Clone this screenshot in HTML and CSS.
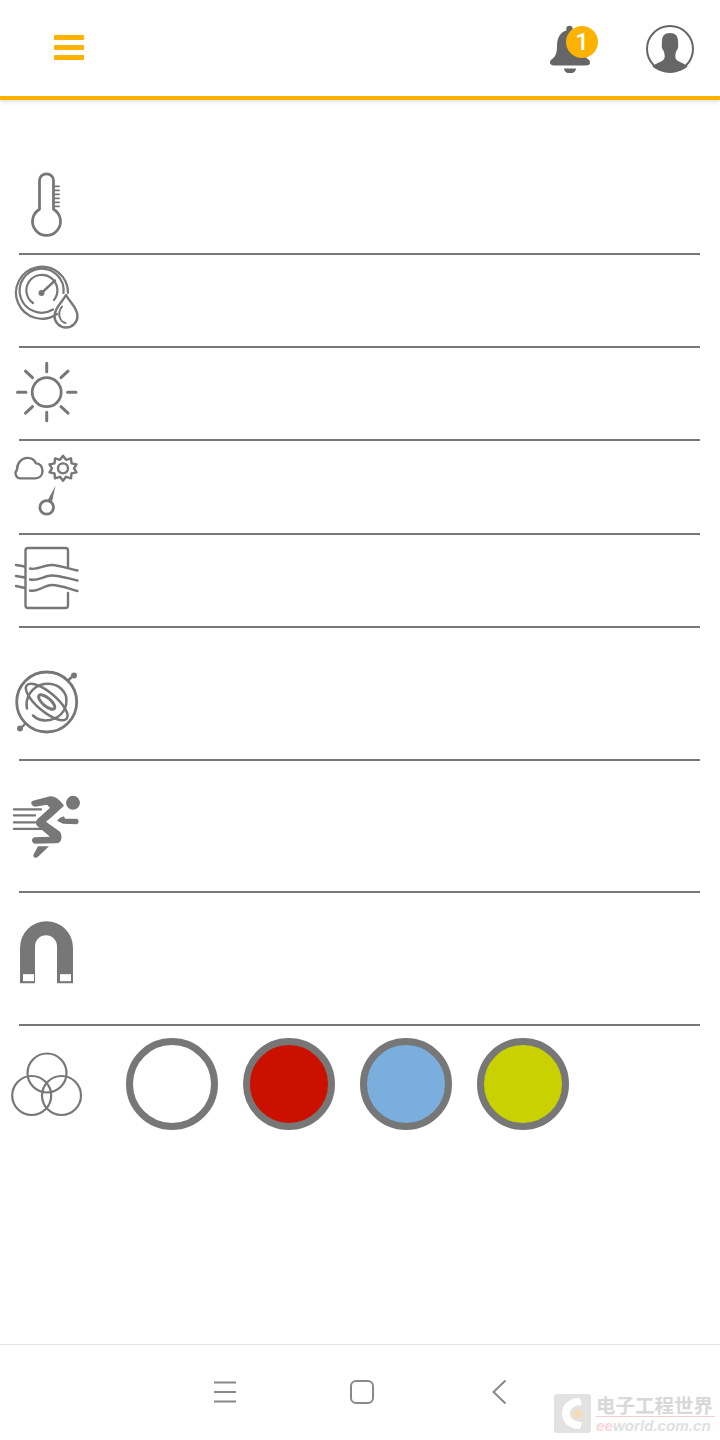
FILE: index.html
```html
<!DOCTYPE html>
<html lang="en">
<head>
    <meta charset="UTF-8">
    <meta name="viewport" content="width=device-width, initial-scale=1.0">
    <title>Sensors</title>
    <link rel="stylesheet" href="styles.css">
</head>
<body>
    <div class="topbar">
        <div class="menu-btn"><span></span><span></span><span></span></div>
        <div class="top-actions">
            <div class="bell">
                <svg class="top-icon" viewBox="550 25 48 48">
                    <circle cx="569.5" cy="29" r="3.2"/>
                    <path d="M570 30C561 30 557 37 557 46C557 54 555 57 551.500 59.500C548.500 62 550 65.500 554 65.500H586C590 65.500 591.500 62 588.500 59.500C585 57 583 54 583 46C583 37 579 30 570 30Z"/>
                    <path d="M564 68.500H576A6 5 0 0 1 564 68.500Z"/>
                </svg>
                <span class="badge">1</span>
            </div>
            <svg class="top-icon" viewBox="646 25 48 48">
                <circle class="avatar-ring" cx="670" cy="49" r="23"/>
                <path d="M670 33C664.500 33 662 36 662 41C662 44 661.500 46 662 48C662.500 50 663.500 50 664 52C664.500 54 665 56 664.500 58C664 60 662 61 659 62.500C656 64 653.500 65 652.500 66.500C657 70.500 663 72 670 72C677 72 683 70.500 687.500 66.500C686.500 65 684 64 681 62.500C678 61 676 60 675.500 58C675 56 675.500 54 676 52C676.500 50 677.500 50 678 48C678.500 46 678 44 678 41C678 36 675.500 33 670 33Z"/>
            </svg>
        </div>
    </div>

    <div class="sensor-list">
        <div class="row">
            <!-- temperature -->
            <svg class="icon" viewBox="15 175.170 64 64">
                <path d="M39.500 209.500V180.500A7 6.500 0 0 1 53.500 180.500V209.500A14 14 0 1 1 39.500 209.500Z"/>
                <path d="M54 186.500H59M54 190.500H59M54 194.500H59M54 198.500H59M54 202.500H59M54 206.500H59" stroke-width="1.800"/>
            </svg>
        </div>
        <div class="rule"></div>
        <div class="row">
            <!-- pressure and humidity -->
            <svg class="icon" viewBox="15 268.500 64 64">
                <path d="M57 314.500A26 26 0 1 1 68 293.500" stroke-width="2.200"/>
                <path d="M53 310A22 22 0 1 1 63.500 293.500" stroke-width="2.200"/>
                <path d="M33 303.500A15.500 15.500 0 1 1 54 300.500" stroke-width="2.200"/>
                <path d="M41.500 293.500L55 281" stroke-width="2.400"/>
                <circle class="solid" cx="41.500" cy="293.500" r="3"/>
                <path d="M66 295.500C70 303 77.500 308 77.500 316.500A11.500 11.500 0 0 1 54.500 316.500C54.500 308 62 303 66 295.500Z" stroke-width="2.400"/>
                <path d="M62 307C59 311 58.500 315 60 318.500C61 321 63 323 65.500 323.500" stroke-width="2"/>
            </svg>
        </div>
        <div class="rule"></div>
        <div class="row">
            <!-- light -->
            <svg class="icon" viewBox="15 361.830 64 64">
                <circle cx="46.700" cy="392" r="14.500"/>
                <path d="M46.700 363V371.500M46.700 412V420.500M17.500 392H26M67.500 392H76M25.500 371L32.500 377.500M61 377.500L68 371M25.500 413L32.500 406.500M61 406.500L68 413" stroke-width="3"/>
            </svg>
        </div>
        <div class="rule"></div>
        <div class="row">
            <!-- color temperature -->
            <svg class="icon" viewBox="15 455.170 64 64">
                <path d="M21 478.500A5 5 0 0 1 17 470C17 463 21.500 458 27.500 458C31.500 458 34.500 460 36 463.500C40 463.500 42.500 467 42.500 471C42.500 475.500 39.500 478.500 35.500 478.500Z" stroke-width="2.400"/>
                <path d="M63 456L66 460L71 458.500L71.500 463.500L76.500 464.500L74 468.500L76.500 472.500L71.500 473.500L71 478.500L66 477L63 481L60 477L55 478.500L54.500 473.500L49.500 472.500L52 468.500L49.500 464.500L54.500 463.500L55 458.500L60 460Z" stroke-width="2.400"/>
                <circle cx="63" cy="468.500" r="5" stroke-width="2.400"/>
                <circle cx="46.700" cy="507.500" r="6.800" stroke-width="2.800"/>
                <path class="solid" d="M55.500 486L52 502L48 500Z"/>
            </svg>
        </div>
        <div class="rule"></div>
        <div class="row">
            <!-- air flow -->
            <svg class="icon" viewBox="15 548.500 64 64">
                <path d="M68 568V551A2.500 2.500 0 0 0 65.500 548.500H28A2.500 2.500 0 0 0 25.500 551V606A2.500 2.500 0 0 0 28 608.500H65.500A2.500 2.500 0 0 0 68 606V593.500" stroke-width="2.400"/>
                <path d="M16 565.500L25 567M16 576.500L25 578M16 586.500L25 588.500M30 569C38 571 44 565 52 565.500C60 566 68 569 77.500 571M30 580C38 582 44 576 52 576C60 576 68 579 77.500 581M30 591C38 593 44 585.500 52 585.500C60 585.500 68 589 77.500 591.500" stroke-width="2.400"/>
            </svg>
        </div>
        <div class="rule"></div>
        <div class="row tall">
            <!-- gyroscope -->
            <svg class="icon" viewBox="15 661.500 64 64">
                <circle cx="46.700" cy="702.500" r="30" stroke-width="2.800"/>
                <path d="M68 681L74 675.500M25.500 724L20 729.500" stroke-width="2.400"/>
                <circle class="solid" cx="74" cy="676" r="3"/>
                <circle class="solid" cx="20" cy="729" r="3"/>
                <ellipse cx="46.700" cy="702.500" rx="26" ry="9.500" transform="rotate(40 46.700 702.500)" stroke-width="2.500"/>
                <path d="M27 709C25 699 31 687 44 684.500C56 682.500 65 690 66.500 699M66 697C68 708 62 718 50 720.500C44 721.500 37 720 33 716" stroke-width="2.500"/>
                <ellipse cx="46.700" cy="702.500" rx="10" ry="4" transform="rotate(40 46.700 702.500)" stroke-width="3"/>
            </svg>
        </div>
        <div class="rule"></div>
        <div class="row tall">
            <!-- motion -->
            <svg class="icon" viewBox="15 794.170 64 64">
                <path d="M14 809.500H41M14 815.500H35M14 822.500H35M14 829H43" stroke-width="2.400"/>
                <circle class="solid" cx="73" cy="803" r="7"/>
                <path class="solid" d="M33 801L50 796.500C55 796 60 800 64 806L52 817L46 822L60 832C62 835 62 840 60 842C59 843 57 843.500 55 843.500L35 844C31 843.500 31 837.500 35 837.500L50 837L37 826C35 823 36 820 39 818L50 808L47 805L35 807C31 806 30 802 33 801Z"/>
                <path class="solid" d="M60 818L64 816.500L65 819H76C79.500 819 79.500 824.500 76 824.500L63 824L57 821Z"/>
                <path class="solid" d="M38 846.500H49L38 857C35 859.500 32 857 34 854Z"/>
            </svg>
        </div>
        <div class="rule"></div>
        <div class="row tall">
            <!-- magnet -->
            <svg class="icon" viewBox="15 926.830 64 64">
                <path class="solid" d="M20 983V947.500A26.500 26.500 0 0 1 73 947.500V983H57V946A11 11 0 0 0 35 946V983Z"/>
                <rect class="cutout" x="23" y="974" width="11" height="7"/>
                <rect class="cutout" x="60" y="974" width="11" height="7"/>
            </svg>
        </div>
        <div class="rule"></div>
        <div class="row color-row">
            <!-- color -->
            <svg class="icon venn" viewBox="11 1052 72 64">
                <circle cx="47" cy="1073" r="19.500" stroke-width="2.200"/>
                <circle cx="31.700" cy="1095.500" r="19.500" stroke-width="2.200"/>
                <circle cx="61.500" cy="1095.500" r="19.500" stroke-width="2.200"/>
            </svg>
            <div class="swatches">
                <div class="swatch white"></div>
                <div class="swatch red"></div>
                <div class="swatch blue"></div>
                <div class="swatch lime"></div>
            </div>
        </div>
    </div>

    <div class="softkeys">
        <svg class="softkey" viewBox="0 0 24 24"><path d="M1 2.500H23M1 12H23M1 21.500H23"/></svg>
        <svg class="softkey" viewBox="0 0 24 24"><rect x="1" y="1" width="22" height="22" rx="5"/></svg>
        <svg class="softkey" viewBox="0 0 24 24"><path d="M19.500 0.500L7.500 12L19.500 23.500"/></svg>
    </div>

    <div class="watermark">
        <svg class="wm-logo" viewBox="0 0 37 39">
            <rect width="37" height="39" rx="3" fill="#e4e2e0"/>
            <path d="M26 4C14 4 8 11 8 19.500C8 28 14 35 26 35L28 28C21 28 16 25 16 19.500C16 14 21 11 28 11Z" fill="#fff"/>
            <circle cx="23.500" cy="20" r="4.500" fill="#f6dcb4"/>
        </svg>
        <div class="wm-text">
            <div class="wm-cn">电子工程世界</div>
            <div class="wm-en"><span class="wm-ee">ee</span>world.com.cn</div>
        </div>
    </div>
</body>
</html>
```

FILE: styles.css
```css
html, body {
    margin: 0;
    padding: 0;
}
body {
    width: 720px;
    height: 1440px;
    position: relative;
    display: flex;
    flex-direction: column;
    overflow: hidden;
    background-color: #fff;
    font-family: Roboto, Arial, sans-serif;
}

/* top bar */
.topbar {
    height: 96px;
    box-sizing: content-box;
    flex-shrink: 0;
    display: flex;
    justify-content: space-between;
    align-items: center;
    padding: 0 26px 0 54px;
    border-bottom: 4px solid #fbb200;
    box-shadow: 0 2px 4px rgba(0, 0, 0, 0.12);
}
.menu-btn {
    display: flex;
    flex-direction: column;
    gap: 5px;
    margin-bottom: 1px;
}
.menu-btn span {
    display: block;
    width: 30px;
    height: 5px;
    border-radius: 1px;
    background-color: #fbb200;
}
.top-actions {
    display: flex;
    gap: 48px;
    padding-top: 2px;
}
.bell {
    position: relative;
    width: 48px;
    height: 48px;
}
.top-icon {
    display: block;
    width: 48px;
    height: 48px;
    fill: #666;
}
.avatar-ring {
    fill: none;
    stroke: #666;
    stroke-width: 2;
}
.badge {
    position: absolute;
    left: 16px;
    top: 1px;
    width: 32px;
    height: 32px;
    border-radius: 50%;
    background-color: #fbb200;
    color: #fff;
    font-size: 24px;
    font-weight: 500;
    line-height: 32px;
    text-align: center;
}

/* sensor rows */
.sensor-list {
    flex: 1;
    padding-top: 61.5px;
}
.row {
    height: 91.33px;
    display: flex;
    align-items: center;
    padding-left: 15px;
}
.row.tall {
    height: 130.67px;
}
.rule {
    height: 2px;
    margin: 0 20px 0 19px;
    background-color: #777;
}
.icon {
    display: block;
    width: 64px;
    height: 64px;
    overflow: visible;
    fill: none;
    stroke: #777;
    stroke-width: 2.8;
    stroke-linecap: round;
    stroke-linejoin: round;
}
.icon .solid {
    fill: #777;
    stroke: none;
}
.icon .cutout {
    fill: #fff;
    stroke: none;
}

/* color row */
.row.color-row {
    height: 115.67px;
    padding-left: 11px;
}
.venn {
    width: 72px;
    margin-right: 42.5px;
}
.swatches {
    display: flex;
    gap: 25px;
}
.swatch {
    width: 92px;
    height: 92px;
    box-sizing: border-box;
    border: 7.5px solid #777;
    border-radius: 50%;
}
.white { background-color: #fff; }
.red { background-color: #cb1000; }
.blue { background-color: #7aaedd; }
.lime { background-color: #c9d200; }

/* phone soft keys */
.softkeys {
    height: 96px;
    flex-shrink: 0;
    box-sizing: border-box;
    display: flex;
    align-items: center;
    gap: 112.5px;
    padding: 0 0 2px 213px;
    border-top: 1px solid #e4e4e4;
}
.softkey {
    display: block;
    width: 24px;
    height: 24px;
    fill: none;
    stroke: #888;
    stroke-width: 2;
}

/* watermark lying over the corner */
.watermark {
    position: absolute;
    left: 554px;
    top: 1394px;
    display: flex;
    gap: 5px;
}
.wm-logo {
    display: block;
    width: 37px;
    height: 39px;
}
.wm-text {
    width: 119px;
}
.wm-cn {
    font-family: "Noto Sans CJK SC", sans-serif;
    font-size: 19.5px;
    font-weight: 700;
    line-height: 22px;
    color: #d8d8d8;
    border-bottom: 1px solid #f5cfcf;
    white-space: nowrap;
}
.wm-en {
    font-family: "Liberation Sans", Arial, sans-serif;
    font-size: 15.2px;
    font-style: italic;
    font-weight: 700;
    line-height: 17px;
    color: #e0e0e0;
    white-space: nowrap;
}
.wm-ee {
    color: #f9d6d8;
}
```
